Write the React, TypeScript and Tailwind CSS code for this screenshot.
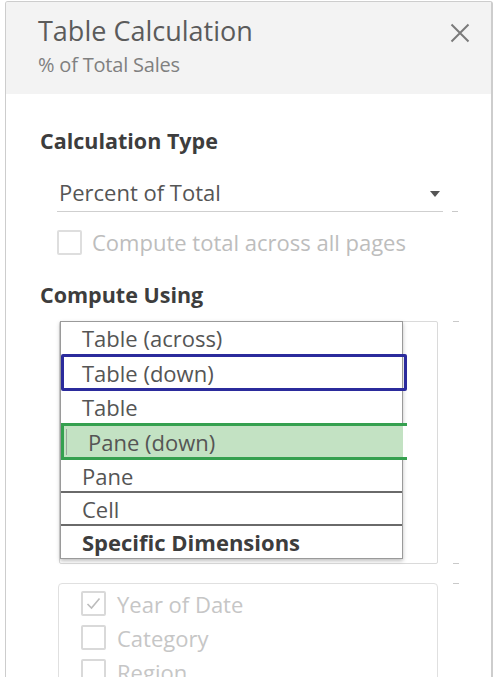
import React from "react";

type Row = {
  label: string;
  kind?: "blue" | "green" | "bold";
  divider?: boolean;
};

const ROWS: Row[] = [
  { label: "Table (across)" },
  { label: "Table (down)", kind: "blue" },
  { label: "Table" },
  { label: "Pane (down)", kind: "green" },
  { label: "Pane", divider: true },
  { label: "Cell", divider: true },
  { label: "Specific Dimensions", kind: "bold" },
];

const DIMENSIONS = [
  { label: "Year of Date", checked: true },
  { label: "Category", checked: false },
  { label: "Region", checked: false },
];

function Dash() {
  return <div className="w-[6px] h-px bg-[#c9c9c9]" />;
}

function ListRow({ row }: { row: Row }) {
  if (row.kind === "blue") {
    return (
      <div className="w-[346px] h-[37px] border-[3px] border-[#2b2b9c] rounded-[2px] pl-[18px] flex items-center text-[22px] leading-[30px] text-[#555]">
        {row.label}
      </div>
    );
  }
  if (row.kind === "green") {
    return (
      <div className="w-[346px] h-[37px] border-y-[3px] border-l-[3px] border-[#35a04f] flex items-stretch text-[22px] leading-[30px] text-[#555]">
        <div className="flex-1 bg-[#c3e2c3] flex items-center">
          <div className="w-px h-[26px] bg-[#9aa59a] ml-[2px]" />
          <span className="pl-[21px]">{row.label}</span>
        </div>
        <div className="w-[4px] bg-white" />
      </div>
    );
  }
  return (
    <div
      className={`w-full flex items-center pl-[21px] text-[22px] leading-[30px] ${
        row.kind === "bold" ? "h-[32px] font-bold text-[#3d3d3d]" : "h-[32px] text-[#555]"
      } ${row.divider ? "border-b-2 border-[#6a6a6a] h-[33px]" : ""}`}
    >
      {row.label}
    </div>
  );
}

export default function App() {
  return (
    <div className="w-[500px] h-[688px] bg-white overflow-hidden font-['Open_Sans',sans-serif]">
      <div className="ml-[5px] mt-px w-[488px] h-[676px] border-x border-t border-[#cdcdcd] border-r-2 rounded-t-[3px] overflow-hidden flex flex-col">
        {/* header */}
        <div className="flex-none h-[92px] bg-[#f3f3f3] flex justify-between pl-[32px] pr-[21px] pt-[12px]">
          <div>
            <div className="text-[27px] leading-[34px] text-[#5b5b5b]">Table Calculation</div>
            <div className="mt-[4px] text-[20px] leading-[26px] text-[#808080] tracking-[-0.2px]">% of Total Sales</div>
          </div>
          <svg className="mt-[9px]" width="20" height="20" viewBox="0 0 20 20">
            <path d="M1.5 1.5 L18.5 18.5 M18.5 1.5 L1.5 18.5" stroke="#7a7a7a" strokeWidth="2" fill="none" />
          </svg>
        </div>

        {/* body */}
        <div className="flex-1 bg-white pl-[34px] pt-[33px]">
          <div className="text-[21.5px] leading-[28px] font-bold text-[#3d3d3d]">Calculation Type</div>

          <div className="mt-[22px] ml-[17px] flex items-end gap-[9px]">
            <div className="w-[386px] border-b border-[#cfcfcf] pb-[4px] pl-[2px] pr-[2px] flex items-center justify-between">
              <span className="text-[22px] leading-[30px] text-[#555]">Percent of Total</span>
              <svg width="10" height="6" viewBox="0 0 10 6" className="mr-[1px] mt-[4px]">
                <path d="M0 0 H10 L5 6 Z" fill="#555" />
              </svg>
            </div>
            <Dash />
          </div>

          <div className="mt-[15px] ml-[17px] flex items-center gap-[10px]">
            <div className="w-[25px] h-[25px] border-2 border-[#dedede] rounded-[2px]" />
            <span className="text-[22px] leading-[30px] text-[#bdbdbd]">Compute total across all pages</span>
          </div>

          <div className="mt-[24px] text-[21.5px] leading-[28px] font-bold text-[#3d3d3d]">Compute Using</div>

          {/* compute-using dropdown */}
          <div className="mt-[12px] ml-[19px] flex gap-[15px]">
            <div className="w-[379px] h-[243px] border border-[#dadada] rounded-[2px]">
              <div className="-mt-px w-[343px] border border-[#9a9a9a] bg-white shadow-[0_2px_4px_rgba(0,0,0,0.25)] flex flex-col">
                {ROWS.map((row) => (
                  <ListRow key={row.label} row={row} />
                ))}
              </div>
            </div>
            <div className="h-[243px] flex flex-col justify-between">
              <Dash />
              <Dash />
            </div>
          </div>

          {/* dimensions */}
          <div className="mt-[19px] ml-[18px] flex gap-[15px]">
            <div className="w-[380px] h-[120px] border border-[#e0e0e0] rounded-[4px] pl-[22px] pt-[7px] flex flex-col gap-[9px]">
              {DIMENSIONS.map((d) => (
                <div key={d.label} className="flex items-center gap-[11px] h-[25px]">
                  <div className="w-[25px] h-[25px] border-2 border-[#d9d9d9] rounded-[2px] flex items-center justify-center">
                    {d.checked && (
                      <svg width="15" height="13" viewBox="0 0 15 13">
                        <path d="M1.5 7 L5.5 11 L13.5 1.5" stroke="#bcbcbc" strokeWidth="1.6" fill="none" />
                      </svg>
                    )}
                  </div>
                  <span className="text-[22px] leading-[30px] text-[#c6c6c6]">{d.label}</span>
                </div>
              ))}
            </div>
            <Dash />
          </div>
        </div>
      </div>
    </div>
  );
}
